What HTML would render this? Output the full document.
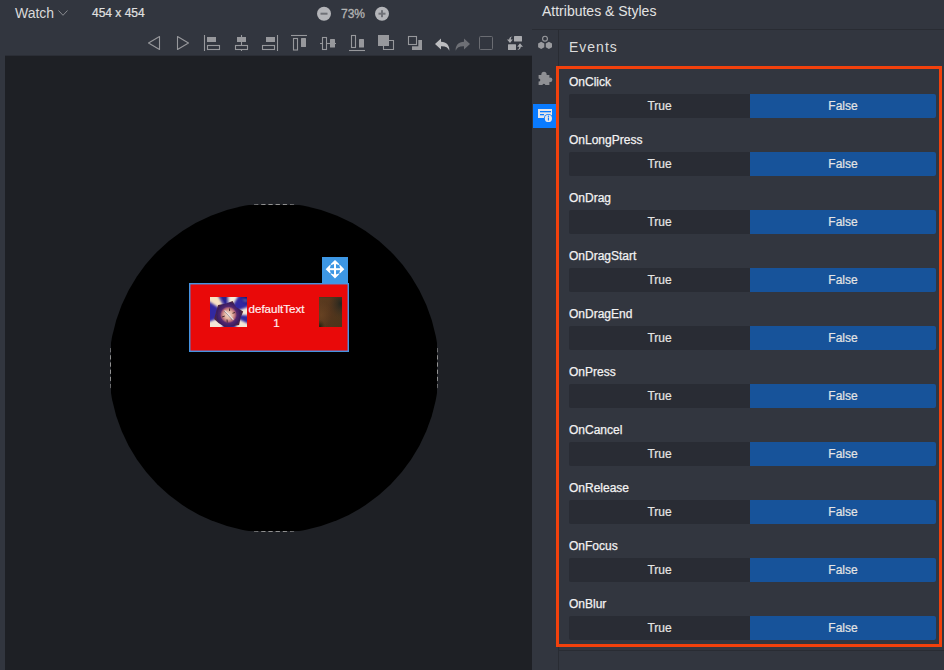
<!DOCTYPE html>
<html lang="en">
<head>
<meta charset="utf-8">
<title>Events</title>
<style>
  html, body { margin: 0; padding: 0; }
  body {
    width: 944px; height: 670px; overflow: hidden; position: relative;
    background: #32363f;
    font-family: "Liberation Sans", Arial, sans-serif;
    color: #e6e6e6;
  }
  .abs { position: absolute; }
  .t { position: absolute; white-space: nowrap; line-height: 1; }

  /* canvas */
  #canvas { left: 5px; top: 55px; width: 527px; height: 615px; background: #1e2025; border-top: 1px solid #2b2e36; box-sizing: border-box; }
  #handle { left: 322px; top: 257px; width: 26px; height: 26px; background: #3d97e4; }

  /* right panel */
  .hline { height: 1px; background: #292c33; }
  .vline { width: 1px; background: #292c33; }
  #active { left: 533px; top: 104px; width: 23px; height: 24px; background: #0a7bff; }
  #sel { left: 556px; top: 66px; width: 380px; height: 575px; border: 3px solid #f2410c; }

  .lbl { left: 569px; font-size: 12px; color: #f2f2f2; -webkit-text-stroke: 0.25px #f2f2f2; }
  .btn { height: 24px; font-size: 12px; text-align: center; line-height: 24px; color: #e4e4e4; -webkit-text-stroke: 0.2px #e4e4e4; }
  .bt { left: 569px; width: 181px; background: #292c34; border-radius: 2px 0 0 2px; }
  .bf { left: 750px; width: 186px; background: #17539a; border-radius: 0 2px 2px 0; }
</style>
</head>
<body>

<!-- ===== top-left header ===== -->
<div class="t" style="left:15px; top:6px; font-size:14px; color:#d9d9d9;">Watch</div>
<svg class="abs" style="left:57px; top:8px;" width="12" height="10" viewBox="0 0 12 10">
  <path d="M1.5 2.5 L6 7.3 L10.5 2.5" fill="none" stroke="#8a8c91" stroke-width="1"/>
</svg>
<div class="t" style="left:92px; top:7px; font-size:12px; color:#e0e0e0; -webkit-text-stroke:0.2px #e0e0e0;">454 x 454</div>

<!-- zoom control -->
<svg class="abs" style="left:316px; top:6px;" width="16" height="16" viewBox="0 0 16 16">
  <circle cx="8" cy="7.7" r="7" fill="#b4b5b9"/>
  <rect x="4.5" y="6.7" width="7" height="2" fill="#6f7177"/>
</svg>
<div class="t" style="left:341px; top:8px; font-size:12px; color:#b3b3b3; -webkit-text-stroke:0.3px #b3b3b3;">73%</div>
<svg class="abs" style="left:374px; top:6px;" width="16" height="16" viewBox="0 0 16 16">
  <circle cx="8" cy="7.7" r="7" fill="#b4b5b9"/>
  <rect x="4.5" y="6.7" width="7" height="2" fill="#6f7177"/>
  <rect x="7" y="4.2" width="2" height="7" fill="#6f7177"/>
</svg>

<!-- ===== toolbar icons ===== -->
<svg class="abs" style="left:140px; top:30px;" width="392" height="25" viewBox="140 30 392 25">
  <g fill="none" stroke="#97989c" stroke-width="1.1">
    <!-- prev / next -->
    <path d="M159.5 36.5 L148.5 43 L159.5 49.5 Z" stroke-linejoin="round"/>
    <path d="M177.500 36.500 L188.500 43 L177.500 49.500 Z" stroke-linejoin="round"/>
    <!-- align left -->
    <path d="M204.500 35 V51"/>
    <rect x="207.500" y="45.500" width="12" height="4"/>
    <!-- align center -->
    <path d="M241.500 35 V51"/>
    <rect x="235.500" y="45.500" width="12" height="4" fill="#32363f"/>
    <!-- align right -->
    <path d="M277.500 35 V51"/>
    <rect x="262.500" y="45.500" width="12" height="4"/>
    <!-- align top -->
    <path d="M291 35.500 H307"/>
    <rect x="293.500" y="38.500" width="4" height="11.500"/>
    <!-- align middle -->
    <path d="M320 43.500 H336"/>
    <rect x="322.500" y="37.500" width="4" height="12" fill="#32363f"/>
    <!-- align bottom -->
    <path d="M349 50.500 H365"/>
    <rect x="351.500" y="35.500" width="4" height="12"/>
    <!-- bring front outline -->
    <path d="M389 40.500 H393.500 V49.500 H383.500 V46"/>
  </g>
  <g fill="#97989c">
    <rect x="207" y="37" width="9" height="5"/>
    <rect x="237" y="37" width="9" height="5"/>
    <rect x="266" y="37" width="9" height="5"/>
    <rect x="301" y="38" width="5" height="9" rx="0.500"/>
    <rect x="330" y="39" width="5" height="8.500" rx="0.500"/>
    <rect x="359" y="39" width="5" height="8.500" rx="0.500"/>
    <!-- bring front filled -->
    <rect x="378" y="35" width="11" height="11"/>
    <!-- send back filled L -->
    <path d="M412 40 H422 V50 H412 Z"/>
  </g>
  <rect x="407" y="35" width="11.300" height="11.300" fill="#32363f"/>
  <rect x="408.500" y="36.500" width="8" height="8" fill="none" stroke="#97989c" stroke-width="1.100"/>
  <!-- undo -->
  <path d="M441 38.500 L435 44 L441 49.500 V46.200 C445.500 46 448 47.200 449.300 50.800 C449.800 45.500 446.500 42 441 41.800 Z" fill="#bcbdc0"/>
  <!-- redo -->
  <path d="M464 38.500 L470 44 L464 49.500 V46.200 C459.500 46 457 47.200 455.700 50.800 C455.200 45.500 458.500 42 464 41.800 Z" fill="#6d6f75"/>
  <!-- square -->
  <rect x="479.500" y="36.500" width="13" height="13" rx="1" fill="none" stroke="#6a6c72" stroke-width="1"/>
  <!-- swap -->
  <g fill="#a9aaae">
    <rect x="514" y="36" width="8" height="5.500" rx="0.500"/>
    <rect x="508" y="44.200" width="8" height="5.800" rx="0.500"/>
    <path d="M512.800 36.200 C511.200 37 510.700 38.300 510.800 39.500 L512.800 39.500 L510 43 L507 39.500 L509.200 39.500 C509.200 37.800 510.500 36.500 512.800 36.200 Z"/>
    <path d="M517.200 50 C518.800 49.200 519.300 47.900 519.200 46.700 L517.200 46.700 L520 43.200 L523 46.700 L520.800 46.700 C520.800 48.400 519.500 49.700 517.200 50 Z"/>
  </g>
</svg>

<!-- ===== canvas ===== -->
<div id="canvas" class="abs"></div>
<svg id="watch" class="abs" style="left:105px; top:199px;" width="338" height="338" viewBox="105 199 338 338">
  <defs>
    <linearGradient id="fh" gradientUnits="userSpaceOnUse" x1="254" y1="0" x2="294" y2="0">
      <stop offset="0" stop-color="#5e5f62"/><stop offset="0.250" stop-color="#929292"/><stop offset="0.750" stop-color="#929292"/><stop offset="1" stop-color="#5e5f62"/>
    </linearGradient>
    <linearGradient id="fv" gradientUnits="userSpaceOnUse" x1="0" y1="348" x2="0" y2="388" >
      <stop offset="0" stop-color="#5e5f62"/><stop offset="0.250" stop-color="#929292"/><stop offset="0.750" stop-color="#929292"/><stop offset="1" stop-color="#5e5f62"/>
    </linearGradient>
  </defs>
  <clipPath id="wc"><rect x="111" y="205" width="326" height="326"/></clipPath>
  <circle cx="274" cy="368" r="164.900" fill="#000" clip-path="url(#wc)"/>
  <g fill="none" stroke-width="1" stroke-dasharray="4.300 2.900">
    <path d="M254 204.500 H294.100" stroke="url(#fh)"/>
    <path d="M254 531.500 H294.100" stroke="url(#fh)"/>
    <path d="M110.500 348 V388.100" stroke="url(#fv)"/>
    <path d="M437.500 348 V388.100" stroke="url(#fv)"/>
  </g>
</svg>
<div id="handle" class="abs">
  <svg class="abs" style="left:0; top:0;" width="26" height="26" viewBox="-13 -12.200 26 26">
    <g fill="#ffffff">
      <rect x="-1" y="-6" width="2" height="12"/>
      <rect x="-6" y="-1" width="12" height="2"/>
      <path d="M0 -9.300 L4.400 -4.900 L3.700 -4.300 L1 -5.200 H-1 L-3.700 -4.300 L-4.400 -4.900 Z"/>
      <path d="M0 9.300 L4.400 4.900 L3.700 4.300 L1 5.200 H-1 L-3.700 4.300 L-4.400 4.900 Z"/>
      <path d="M-9.300 0 L-4.900 -4.400 L-4.300 -3.700 L-5.200 -1 V1 L-4.300 3.700 L-4.900 4.400 Z"/>
      <path d="M9.300 0 L4.900 -4.400 L4.300 -3.700 L5.200 -1 V1 L4.300 3.700 L4.900 4.400 Z"/>
    </g>
  </svg>
</div>
<svg class="abs" style="left:188px; top:282px;" width="163" height="72" viewBox="188 282 163 72">
  <rect x="189.720" y="283.720" width="158.560" height="67.560" fill="#e90909" stroke="#4593e2" stroke-width="1.445"/>
</svg>

<!-- kaleidoscope image -->
<svg class="abs" style="left:210px; top:297px;" width="37" height="30" viewBox="0 0 37 30">
  <defs>
    <filter id="bl" x="-20%" y="-20%" width="140%" height="140%"><feGaussianBlur stdDeviation="1"/></filter>
    <filter id="bl2" x="-20%" y="-20%" width="140%" height="140%"><feGaussianBlur stdDeviation="0.550"/></filter>
    <radialGradient id="ctr" gradientUnits="userSpaceOnUse" cx="18.500" cy="17.800" r="14">
      <stop offset="0" stop-color="#f0ddd2"/>
      <stop offset="0.300" stop-color="#e2b09c"/>
      <stop offset="0.480" stop-color="#b56a78"/>
      <stop offset="0.600" stop-color="#54286e"/>
      <stop offset="0.820" stop-color="#3a1e62"/>
      <stop offset="1" stop-color="#522636"/>
    </radialGradient>
    <clipPath id="cp"><rect width="37" height="30"/></clipPath>
  </defs>
  <g clip-path="url(#cp)">
    <rect width="37" height="30" fill="#3228a0"/>
    <g filter="url(#bl)">
      <path d="M18 17 L-6 1 L-6 -6 L5.500 -6 Z" fill="#f8e2c2"/>
      <path d="M18 17 L18.500 -6 L31 -6 Z" fill="#f8eedc"/>
      <path d="M18 17 L42 8.500 L42 18.500 Z" fill="#f4eadc"/>
      <path d="M18 17 L42 28.500 L42 36 L30 36 Z" fill="#f3e7d7"/>
      <path d="M18 17 L10 36 L-6 36 L-6 27 Z" fill="#f3e7d7"/>
      <path d="M10 -3 L19 -3 L15.500 8 Z" fill="#2a238e"/>
      <path d="M31 -3 L40 -3 L40 8 L33 5 Z" fill="#1f1a80"/>
      <path d="M33 2.500 Q35 4.500 37.500 3.500" stroke="#d8d0ee" stroke-width="0.600" fill="none"/>
    </g>
    <g filter="url(#bl2)">
      <path d="M22.600 3.900 L26 9.900 L33.200 14.600 L30.700 20.500 L29.100 28 L22 29.600 L14.700 29.900 L8.500 26 L4.100 22.100 L6 15 L8.100 8 L16 6.500 Z" fill="url(#ctr)"/>
      <path d="M14.200 14 L22.700 23" stroke="#231624" stroke-width="0.700"/>
      <path d="M15 14 L23 22.300" stroke="#ece6e6" stroke-width="1.400" stroke-linecap="round" opacity="0.850"/>
      <path d="M12 20 L14.800 19 M22.500 16.300 L25 15.500 M17 22.500 L17.300 25.500 M19.500 11.500 L19.600 14" stroke="#3a2226" stroke-width="0.900"/>
    </g>
  </g>
</svg>

<!-- brown image -->
<svg class="abs" style="left:319px; top:297px;" width="23" height="30" viewBox="0 0 23 30">
  <defs>
    <linearGradient id="br" x1="0" y1="0" x2="1" y2="1">
      <stop offset="0" stop-color="#5c3c1f"/>
      <stop offset="0.500" stop-color="#54351d"/>
      <stop offset="1" stop-color="#4a3419"/>
    </linearGradient>
    <radialGradient id="dk" cx="95%" cy="22%" r="55%">
      <stop offset="0" stop-color="#20251f" stop-opacity="0.950"/>
      <stop offset="0.600" stop-color="#3a2f20" stop-opacity="0.500"/>
      <stop offset="1" stop-color="#4a341c" stop-opacity="0"/>
    </radialGradient>
    <radialGradient id="dk2" cx="5%" cy="98%" r="22%">
      <stop offset="0" stop-color="#1f1f0c" stop-opacity="0.950"/>
      <stop offset="1" stop-color="#3a2d14" stop-opacity="0"/>
    </radialGradient>
    <radialGradient id="lt" cx="10%" cy="60%" r="45%">
      <stop offset="0" stop-color="#6a4423" stop-opacity="0.800"/>
      <stop offset="1" stop-color="#6a4423" stop-opacity="0"/>
    </radialGradient>
  </defs>
  <rect width="23" height="30" fill="url(#br)"/>
  <rect width="23" height="30" fill="url(#lt)"/>
  <rect width="23" height="30" fill="url(#dk)"/>
  <rect width="23" height="30" fill="url(#dk2)"/>
  <rect x="0" y="0" width="23" height="0.600" fill="#3f3a20" opacity="0.700"/>
</svg>

<div class="t" style="left:246px; top:302px; width:61px; text-align:center; font-size:11.560px; color:#fff0f0; -webkit-text-stroke:0.2px #fff0f0; line-height:14px; white-space:normal;">defaultText<br>1</div>

<!-- ===== right panel ===== -->
<div class="t" style="left:542px; top:4px; font-size:14px; color:#e3e3e3;">Attributes &amp; Styles</div>
<div class="abs hline" style="left:532px; top:29px; width:412px;"></div>
<div class="abs vline" style="left:558px; top:30px; height:640px;"></div>
<div class="abs hline" style="left:559px; top:650px; width:385px;"></div>
<div class="t" style="left:569px; top:40px; font-size:14px; letter-spacing:1px; color:#dcdcdc;">Events</div>

<!-- side icons -->
<svg class="abs" style="left:533px; top:30px;" width="25" height="100" viewBox="533 30 25 100">
  <circle cx="545" cy="38.700" r="2.400" fill="none" stroke="#9a9b9f" stroke-width="1.100"/>
  <path d="M541.200 41.800 L544.300 43.600 V47.300 L541.200 49.100 L538.100 47.300 V43.600 Z" fill="#9a9b9f"/>
  <path d="M548.900 41.800 L552 43.600 V47.300 L548.900 49.100 L545.800 47.300 V43.600 Z" fill="#9a9b9f"/>
  <!-- puzzle -->
  <g fill="#8f9094">
    <path d="M538.600 75 H549.400 V85 H538.600 Z"/>
    <circle cx="544" cy="74.300" r="2.600"/>
    <circle cx="550" cy="79.800" r="2.400"/>
  </g>
  <g fill="#32363f">
    <circle cx="538.800" cy="80" r="1.500"/>
    <circle cx="543.900" cy="85.300" r="1.500"/>
  </g>
</svg>
<div id="active" class="abs">
  <svg class="abs" style="left:0; top:0;" width="23" height="24" viewBox="533 104 23 24">
    <rect x="538" y="109" width="14" height="9" fill="#e4e5ea"/>
    <rect x="540" y="111" width="11" height="1.300" fill="#0a7bff"/>
    <rect x="540" y="114" width="4" height="1.300" fill="#0a7bff"/>
    <circle cx="548.400" cy="118.400" r="4.500" fill="#0a7bff"/>
    <circle cx="548.400" cy="118.400" r="3.600" fill="#e4e5ea"/>
    <rect x="547.900" y="117.500" width="1.100" height="3" fill="#0a7bff"/>
    <circle cx="548.450" cy="116.300" r="0.700" fill="#0a7bff"/>
  </svg>
</div>

<!-- selected region -->
<div id="sel" class="abs"></div>

<div class="t lbl" style="top:76px;">OnClick</div>
<div class="abs btn bt" style="top:94px;">True</div><div class="abs btn bf" style="top:94px;">False</div>
<div class="t lbl" style="top:134px;">OnLongPress</div>
<div class="abs btn bt" style="top:152px;">True</div><div class="abs btn bf" style="top:152px;">False</div>
<div class="t lbl" style="top:192px;">OnDrag</div>
<div class="abs btn bt" style="top:210px;">True</div><div class="abs btn bf" style="top:210px;">False</div>
<div class="t lbl" style="top:250px;">OnDragStart</div>
<div class="abs btn bt" style="top:268px;">True</div><div class="abs btn bf" style="top:268px;">False</div>
<div class="t lbl" style="top:308px;">OnDragEnd</div>
<div class="abs btn bt" style="top:326px;">True</div><div class="abs btn bf" style="top:326px;">False</div>
<div class="t lbl" style="top:366px;">OnPress</div>
<div class="abs btn bt" style="top:384px;">True</div><div class="abs btn bf" style="top:384px;">False</div>
<div class="t lbl" style="top:424px;">OnCancel</div>
<div class="abs btn bt" style="top:442px;">True</div><div class="abs btn bf" style="top:442px;">False</div>
<div class="t lbl" style="top:482px;">OnRelease</div>
<div class="abs btn bt" style="top:500px;">True</div><div class="abs btn bf" style="top:500px;">False</div>
<div class="t lbl" style="top:540px;">OnFocus</div>
<div class="abs btn bt" style="top:558px;">True</div><div class="abs btn bf" style="top:558px;">False</div>
<div class="t lbl" style="top:598px;">OnBlur</div>
<div class="abs btn bt" style="top:616px;">True</div><div class="abs btn bf" style="top:616px;">False</div>

</body>
</html>
